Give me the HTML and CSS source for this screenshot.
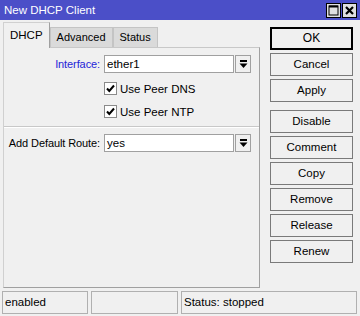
FILE: index.html
```html
<!DOCTYPE html>
<html>
	<head>
		<meta charset="utf-8" />
		<title>New DHCP Client</title>
		<link rel="stylesheet" href="styles.css">
	</head>
	<body>
		<div class="titlebar">
			<span class="title">New DHCP Client</span>
			<div class="winbtns">
				<span class="winbtn">
					<svg width="13" height="13" viewBox="0 0 13 13"><rect x="2" y="2" width="9" height="9" fill="none" stroke="#000" stroke-width="1"/><line x1="2" y1="2.5" x2="11" y2="2.5" stroke="#000" stroke-width="2"/></svg>
				</span>
				<span class="winbtn">
					<svg width="13" height="13" viewBox="0 0 13 13"><path d="M3 3 L10 10 M10 3 L3 10" stroke="#000" stroke-width="2.2"/></svg>
				</span>
			</div>
		</div>

		<div class="main">
			<div class="left">
				<div class="tabs">
					<span class="tab active">DHCP</span>
					<span class="tab">Advanced</span>
					<span class="tab">Status</span>
				</div>
				<div class="panel">
					<div class="row first">
						<span class="label blue">Interface:</span>
						<span class="field">ether1</span>
						<span class="drop"><svg width="9" height="9" viewBox="0 0 9 9"><rect x="1" y="0" width="7" height="2" fill="#000"/><path d="M0.5 3.5 L8.5 3.5 L4.5 8 Z" fill="#000"/></svg></span>
					</div>
					<div class="checkrow c1">
						<span class="check"><svg width="11" height="11" viewBox="0 0 11 11"><path d="M2 5.5 L4.3 8 L9 2.5" fill="none" stroke="#000" stroke-width="2"/></svg></span>
						<span>Use Peer DNS</span>
					</div>
					<div class="checkrow c2">
						<span class="check"><svg width="11" height="11" viewBox="0 0 11 11"><path d="M2 5.5 L4.3 8 L9 2.5" fill="none" stroke="#000" stroke-width="2"/></svg></span>
						<span>Use Peer NTP</span>
					</div>
					<div class="sep"></div>
					<div class="row">
						<span class="label">Add Default Route:</span>
						<span class="field">yes</span>
						<span class="drop"><svg width="9" height="9" viewBox="0 0 9 9"><rect x="1" y="0" width="7" height="2" fill="#000"/><path d="M0.5 3.5 L8.5 3.5 L4.5 8 Z" fill="#000"/></svg></span>
					</div>
				</div>
			</div>

			<div class="buttons">
				<span class="btn ok">OK</span>
				<span class="btn">Cancel</span>
				<span class="btn">Apply</span>
				<span class="btn spaced">Disable</span>
				<span class="btn">Comment</span>
				<span class="btn">Copy</span>
				<span class="btn">Remove</span>
				<span class="btn">Release</span>
				<span class="btn">Renew</span>
			</div>
		</div>

		<div class="statusbar">
			<span class="cell s1">enabled</span>
			<span class="cell s2"></span>
			<span class="cell s3">Status: stopped</span>
		</div>
	</body>
</html>
```

FILE: styles.css
```css
html, body {
	margin: 0;
	padding: 0;
}

body {
	width: 360px;
	height: 316px;
	background-color: #f0f0f0;
	font-family: "Liberation Sans", Arial, sans-serif;
	font-size: 11px;
	color: #000;
	overflow: hidden;
	white-space: nowrap;
}

.titlebar {
	height: 20px;
	background-color: #4b4fc8;
	display: flex;
	align-items: center;
	justify-content: space-between;
	padding: 0 3px 0 4px;
}

	.title {
		color: #fff;
		font-size: 11.5px;
	}

	.winbtns {
		display: flex;
		gap: 1px;
	}

	.winbtn {
		width: 13px;
		height: 13px;
		border: 1px solid #000;
		background-color: #e0e0e0;
		display: flex;
	}

.main {
	display: flex;
	padding-top: 2px;
	height: 265px;
}

.left {
	margin-left: 3px;
	width: 257px;
}

.tabs {
	display: flex;
	align-items: flex-end;
	height: 25px;
}

	.tab {
		height: 19px;
		line-height: 19px;
		padding: 0 6px;
		font-size: 11px;
		background-color: #dadada;
		border: 1px solid #c4c4c4;
		border-bottom: none;
	}

	.tab.active {
		height: 25px;
		line-height: 24px;
		padding: 0 6px;
		font-size: 11.5px;
		background-color: #f0f0f0;
		border-color: #d0d0d0 #a0a0a0 #f0f0f0 #d0d0d0;
		position: relative;
		margin-bottom: -1px;
	}

.panel {
	height: 239px;
	border: 1px solid #a0a0a0;
	border-left-color: #d0d0d0;
	border-top-color: #c8c8c8;
}

.row {
	display: flex;
	align-items: center;
	margin-top: 6px;
	height: 18px;
}

	.row.first {
		margin-top: 7px;
	}

	.label {
		width: 100px;
		padding-right: 4px;
		box-sizing: border-box;
		text-align: right;
		font-size: 11px;
		letter-spacing: -0.1px;
	}

	.blue {
		color: #2424d8;
	}

	.field {
		width: 130px;
		height: 18px;
		line-height: 17px;
		box-sizing: border-box;
		border: 1px solid #a0a0a0;
		background-color: #fff;
		padding-left: 2px;
		font-size: 11.5px;
	}

	.drop {
		width: 16px;
		height: 18px;
		margin-left: 1px;
		box-sizing: border-box;
		border: 1px solid #a0a0a0;
		background-color: #f0f0f0;
		display: flex;
		align-items: center;
		justify-content: center;
	}

.checkrow {
	display: flex;
	align-items: center;
	margin-left: 100px;
	height: 13px;
	font-size: 11.5px;
	gap: 3px;
}

	.checkrow.c1 {
		margin-top: 9px;
	}

	.checkrow.c2 {
		margin-top: 10px;
	}

	.check {
		width: 13px;
		height: 13px;
		box-sizing: border-box;
		border: 1px solid #8a8a8a;
		background-color: #fff;
		display: flex;
		align-items: center;
		justify-content: center;
	}

.sep {
	margin-top: 8px;
	height: 0;
	border-top: 1px solid #c8c8c8;
	border-bottom: 1px solid #fff;
}

.buttons {
	margin-left: 10px;
	margin-top: 5px;
	width: 83px;
	display: flex;
	flex-direction: column;
	gap: 3px;
}

	.btn {
		height: 23px;
		line-height: 21px;
		box-sizing: border-box;
		border: 1px solid #7a7a7a;
		background-color: #f0f0f0;
		text-align: center;
		font-size: 11.5px;
	}

	.btn.ok {
		border: 2px solid #000;
		line-height: 19px;
		font-size: 12px;
	}

	.btn.spaced {
		margin-top: 5px;
	}

.statusbar {
	display: flex;
	margin-top: 4px;
	padding: 0 3px 0 2px;
	height: 23px;
	gap: 3px;
}

	.cell {
		box-sizing: border-box;
		height: 23px;
		line-height: 21px;
		border: 1px solid #b0b0b0;
		padding-left: 2px;
		font-size: 11.5px;
	}

	.s1 {
		width: 86px;
	}

	.s2 {
		width: 87px;
	}

	.s3 {
		flex: 1;
	}
```
